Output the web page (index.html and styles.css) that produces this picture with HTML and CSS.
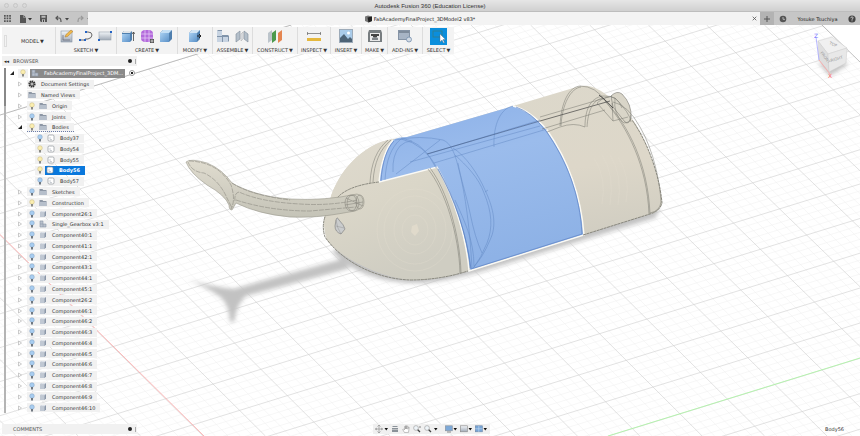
FILE: index.html
```html
<!DOCTYPE html>
<html lang="en">
<head>
<meta charset="utf-8">
<title>Autodesk Fusion 360 (Education License)</title>
<link rel="stylesheet" href="styles.css">
</head>
<body>
<svg class="defs" aria-hidden="true">
  <defs>
    <linearGradient id="gBlue" x1="0" y1="0" x2="1" y2="1"><stop offset="0" stop-color="#a9d0f2"/><stop offset="1" stop-color="#5b91c8"/></linearGradient>
    <linearGradient id="gGrey" x1="0" y1="0" x2="0" y2="1"><stop offset="0" stop-color="#f2f5f8"/><stop offset="1" stop-color="#9fa9b6"/></linearGradient>
    <symbol id="open" viewBox="0 0 8 8"><path d="M6 2v4H2z" fill="#222"/></symbol>
    <symbol id="closed" viewBox="0 0 8 8"><path d="M2.5 2l3 2-3 2z" fill="#fff" stroke="#aaa" stroke-width=".6"/></symbol>
    <symbol id="on" viewBox="0 0 8 8"><circle cx="4" cy="3" r="2.3" fill="#fbeeb0" stroke="#c4b47c" stroke-width=".5"/><path d="M3 5h2v2.5H3z" fill="#8b8b86"/></symbol>
    <symbol id="off" viewBox="0 0 8 8"><circle cx="4" cy="3" r="2.3" fill="#a8cdf0" stroke="#7f9fc0" stroke-width=".5"/><path d="M3 5h2v2.5H3z" fill="#6f7780"/></symbol>
    <symbol id="folder" viewBox="0 0 8 8"><path d="M.5 1h3l.7 1h3.3v5h-7z" fill="#8d97a5"/><path d="M.5 3h7v4h-7z" fill="#b6bfcb"/></symbol>
    <symbol id="gear" viewBox="0 0 8 8"><circle cx="4" cy="4" r="2.8" fill="none" stroke="#333" stroke-width="1.6" stroke-dasharray="1.5 .6"/><circle cx="4" cy="4" r="2" fill="none" stroke="#333" stroke-width="1"/><circle cx="4" cy="4" r=".7" fill="#555"/></symbol>
    <symbol id="body" viewBox="0 0 8 8"><rect x="1" y="1" width="6" height="6" rx="1.2" fill="#fff" stroke="#8e939a" stroke-width=".7"/><path d="M3 3v2.5h2" fill="none" stroke="#aab0b8" stroke-width=".6"/></symbol>
    <symbol id="comp" viewBox="0 0 8 8"><path d="M1 2.5L2.5 1H7v4.5L5.5 7H1z" fill="#8b97a8"/><path d="M1 2.5h4.500V7H1z" fill="#c0c8d3"/><path d="M1 2.500L2.500 1H7L5.500 2.500z" fill="#dde2e9"/></symbol>
    <symbol id="asm" viewBox="0 0 8 8"><path d="M1 1h3v3h3v3H1z" fill="#b9c1cc" stroke="#8b97a8" stroke-width=".6"/><path d="M4 4v3M1 4h3" stroke="#8b97a8" stroke-width=".6"/></symbol>
    <symbol id="cube" viewBox="0 0 14 14"><path d="M1 4l3-3h9v9l-3 3H1z" fill="#4f7fae"/><path d="M1 4h9v9H1z" fill="url(#gBlue)"/><path d="M1 4l3-3h9l-3 3z" fill="#c4dff5"/></symbol>
  </defs>
</svg>

<header class="titlebar">
  <span class="lights"><i></i><i></i><i></i></span>
  <h1>Autodesk Fusion 360 (Education License)</h1>
</header>

<nav class="tabbar">
  <div class="quick">
    <button aria-label="Data panel"><svg width="7" height="7" viewBox="0 0 7 7" fill="#555"><path d="M0 0h1.700v1.700H0zM2.600 0h1.700v1.700H2.600zM5.200 0h1.700v1.700H5.200zM0 2.600h1.700v1.700H0zM2.600 2.600h1.700v1.700H2.600zM5.200 2.600h1.700v1.700H5.200zM0 5.200h1.700v1.700H0zM2.600 5.200h1.700v1.700H2.600zM5.200 5.200h1.700v1.700H5.200z"/></svg></button>
    <button aria-label="File"><svg width="13" height="8" viewBox="0 0 13 8"><path d="M1 0h3.500L7 2.500V8H1z" fill="#555"/><path d="M4.500 0v2.500H7" fill="none" stroke="#aaa" stroke-width=".6"/><path d="M9 3h4l-2 2.500z" fill="#333"/></svg></button>
    <button aria-label="Save"><svg width="7" height="7" viewBox="0 0 7 7"><path d="M0 0h7v7H1L0 6z" fill="#555"/><path d="M1.500 .7h4v2h-4zM2 4.300h3V7H2z" fill="#bbb"/><path d="M3 4.700h1V7H3z" fill="#444"/></svg></button>
    <button aria-label="Undo"><svg width="14" height="8" viewBox="0 0 14 8"><path d="M3 1L1 3l2 2M1 3h3q2 0 2 4" fill="none" stroke="#555" stroke-width="1.200"/><path d="M10 3h4l-2 2.500z" fill="#444"/></svg></button>
    <button aria-label="Redo"><svg width="14" height="8" viewBox="0 0 14 8"><path d="M4 1l2 2-2 2M6 3H3Q1 3 1 7" fill="none" stroke="#999" stroke-width="1.200"/><path d="M10 3h4l-2 2.500z" fill="#777"/></svg></button>
  </div>
  <div class="tab">
    <span class="tab-name"><svg width="7" height="8" viewBox="0 0 7 8"><path d="M0 1.500L3 .5l4 1V6L3.500 7.500 0 6z" fill="#777"/><path d="M2.500 2.500L7 1.500V6L3.500 7.500z" fill="#222"/></svg>FabAcademyFinalProject_3DModel2 v83*</span>
    <button class="close" aria-label="Close tab"><svg width="5" height="5" viewBox="0 0 5 5"><path d="M.7 .7l3.600 3.600M4.300 .7L.7 4.300" stroke="#555" stroke-width=".8"/></svg></button>
  </div>
  <button class="add" aria-label="New tab"><svg width="6" height="6" viewBox="0 0 6 6"><path d="M3 0v6M0 3h6" stroke="#555"/></svg></button>
  <div class="account">
    <button aria-label="Job status"><svg width="8" height="8" viewBox="0 0 8 8"><circle cx="4" cy="4" r="3.300" fill="#555"/><path d="M4 2v2.300h2" stroke="#ccc" fill="none" stroke-width=".8"/></svg></button>
    <button>Yosuke Tsuchiya</button>
    <button aria-label="Help"><svg width="8" height="8" viewBox="0 0 8 8"><circle cx="4" cy="4" r="3.600" fill="#444"/><path d="M2.800 3.200q0-1.300 1.200-1.300t1.200 1Q5.200 3.600 4 4.100v.7M4 5.300v1" stroke="#ddd" fill="none" stroke-width=".8"/></svg></button>
  </div>
</nav>

<main class="viewport">
  <svg class="scene" viewBox="0 25 860 411" preserveAspectRatio="xMidYMid slice" role="img" aria-label="3D model with Body56 highlighted">
    <defs>
      <filter id="soft" x="-20%" y="-20%" width="140%" height="140%"><feGaussianBlur stdDeviation="2"/></filter>
      <linearGradient id="beige" x1=".3" y1="0" x2=".55" y2="1"><stop offset="0" stop-color="#dcd8cb"/><stop offset=".5" stop-color="#ddd7c9"/><stop offset="1" stop-color="#cbc9be"/></linearGradient>
      <linearGradient id="dome" x1="0" y1="0" x2=".4" y2="1"><stop offset="0" stop-color="#dfdace"/><stop offset=".5" stop-color="#dad6c8"/><stop offset="1" stop-color="#cfcdc2"/></linearGradient>
      <linearGradient id="sel" x1="0" y1="0" x2=".3" y2="1"><stop offset="0" stop-color="#8bb0e8"/><stop offset=".4" stop-color="#9bbcec"/><stop offset="1" stop-color="#8eb2e6"/></linearGradient>
      <linearGradient id="arm" x1="0" y1="0" x2="0" y2="1"><stop offset="0" stop-color="#e0dccf"/><stop offset="1" stop-color="#c4c3b7"/></linearGradient>
      <clipPath id="floor"><path d="M0 115L291 25H822L1240 436H0z"/></clipPath>
    </defs>
    <g clip-path="url(#floor)">
      <path id="minor" class="minor"/>
      <path id="major" class="major"/>
      <path d="M0 234.500L204 436" stroke="#ff9a9a" stroke-width=".7"/>
      <path d="M608 436L860 358" stroke="#a8f5a0" stroke-width=".8"/>
    </g>
    <path d="M0 115L291 25M822 25L860 62" stroke="#999" stroke-width=".6"/>

    <g filter="url(#soft)" fill="#c2c2c2">
      <path d="M188 280Q214 287 234 289L342 259L350 268L246 296Q237 303 234 322H230Q229 303 219 296Q205 286 188 280z"/>
      <path d="M332 252Q365 285 425 283Q450 280 480 272L655 218L660 209L640 205L350 240z"/>
    </g>

    <!-- Shell, nose to tail -->
    <path d="M330 200C337 174 361 144 393 139L407 137L513 106L580 86Q590 85 597 89Q609 94 633 120C650 145 660 182 662 203Q660 212 650 214L583 235L468 271C447 277 429 280 410 280C376 276 340 257 327 240Q320 220 330 200z" fill="url(#beige)"/>
    <path d="M330 200C337 174 361 144 393 139Q380 155 379 182L437 167C455 198 466 240 468 271C447 277 429 280 410 280C376 276 340 257 327 240Q320 220 330 200z" fill="url(#dome)"/>
    <g fill="none" stroke="#e4dfd0" stroke-width=".5" opacity=".6">
      <ellipse cx="415" cy="230" rx="13" ry="15"/><ellipse cx="415" cy="230" rx="21" ry="24"/><ellipse cx="415" cy="230" rx="31" ry="34"/><ellipse cx="415" cy="230" rx="38" ry="41"/>
      <path d="M602 155q13 20 8 50M610 155q13 20 8 50M594 158q13 20 8 46M618 157q13 20 8 45"/>
    </g>
    <path d="M412 226l5-2 2 7-4 5-4-4z" fill="#e0dacb"/>
    <path d="M611 96Q617 90 622 94Q632 104 631 118Q629 125 625 122L613 107z" fill="#d9d5c8" stroke="#77766e" stroke-width=".6"/>

    <!-- Selected body -->
    <path d="M379 182C381 163 386 148 393 140Q398 137 407 137L513 106Q530 110 547 130C568 160 581 195 583 235L470 270C466 235 453 195 437 167z" fill="url(#sel)"/>
    <path d="M513 106Q530 110 547 130C568 160 581 195 584 235L469 271C466 235 453 195 437 167L379 182C381 163 386 148 393 140" fill="none" stroke="#fbfaf5" stroke-width="1.400"/>
    <path d="M516 107Q531 112 546 131C567 161 580 195 582 234L471 269C467 236 455 198 438 169M381 181C382 163 387 148 394 141" fill="none" stroke="#5e83c4" stroke-width=".7"/>
    <g fill="none" stroke="#4f76b4" stroke-width=".5" opacity=".7">
      <path d="M385 180C386 161 391 147 401 139Q425 144 436 168M393 172Q392 155 400 146Q405 141 412 141M395 140Q420 135 443 140C451 143 455 154 458 166C466 195 470 232 472 268"/>
      <path d="M401 138Q420 141 432 160C452 190 469 240 470 268M396 174L440 140M453 148C466 156 478 174 485 190C494 209 497 226 490 240Q483 257 473 268M455 155C466 165 479 178 484 193C492 212 493 228 487 243Q481 258 474 267M458 163C461 180 466 194 470 213Q475 238 482 253M455 200C464 220 474 240 474 266M485 192l3-2"/>
      <path d="M494 147C493 124 501 108 513 106M428 154L540 120M434 163L547 129M410 162L540 126"/>
    </g>
    <path d="M427 154L540 121" stroke="#41577d" stroke-width=".6"/>

    <!-- Visible and hidden edges -->
    <g fill="none" stroke="#77776e" stroke-width=".5">
      <path d="M428 169C445 190 459 235 460 273M430 168C447 190 460 235 461 273M370 183C371 163 377 149 388 140M373 182C374 163 380 149 391 140"/>
      <path d="M560 126C561 102 569 87 580 86Q596 86 606 102C629 126 648 165 650 214M561 126C562 104 571 88 581 87M605 101C628 128 647 166 649 214M613 102Q628 105 640 127C654 151 660 183 661 202Q660 211 650 213"/>
      <path d="M540 121L610 101" stroke="#444" stroke-width=".7"/>
      <path d="M540 117L612 96M542 129L605 110M547 132L560 127Q574 122 585 127C585 110 590 98 603 96Q618 95 622 108M587 127C588 112 592 99 604 98M597 103L613 121L628 117M613 121L612 103M597 103Q607 94 615 98Q630 113 631 122M615 98Q613 115 624 123Q631 123 631 115"/>
      <path d="M599 95Q607 101 613 108" stroke="#333" stroke-width=".8"/>
    </g>
    <path d="M379 182Q352 185 340 195Q318 216 325 237C343 263 378 279 410 280Q440 280 468 271M583 235L650 214Q660 211 662 203C660 180 650 145 632 120" fill="none" stroke="#88877d" stroke-width="1" stroke-dasharray="3 .6"/>
    <path d="M336 220Q337 216 339 220Q344 225 345 229L341 234Q335 232 335 226z" fill="#cacccd" stroke="#777" stroke-width=".6"/>
    <path d="M336 220Q337 228 341 234M336 226l8 2" fill="none" stroke="#888" stroke-width=".4"/>

    <!-- Tail -->
    <path d="M186 162Q190 158 207 163Q222 169 232 183C244 190 263 197 290 199Q325 201 357 194Q364 196 363 203Q362 209 355 211C332 215 318 218 290 217Q258 214 236 203L232 210Q229 210 229 205Q225 195 207 185Q190 173 186 162z" fill="url(#arm)" stroke="#99978b" stroke-width=".6"/>
    <g fill="none" stroke="#807f76" stroke-width=".5">
      <path d="M188 162Q192 172 204 173Q219 180 227 198L232 208M189 161Q218 162 231 185Q236 200 231 209M235 201Q234 193 239 192Q261 202 300 204Q330 206 357 200M236 200Q270 211 310 211L356 207M232 183Q250 195 290 200" stroke-dasharray="5 1"/>
      <ellipse cx="351" cy="203" rx="6" ry="8"/><ellipse cx="353" cy="203" rx="6" ry="8"/><ellipse cx="360" cy="202" rx="4" ry="7"/><path d="M345 205l18-3M346 198l17 8"/>
    </g>

    <!-- View cube -->
    <path d="M818 62l12 14 17-11v-3z" fill="#aaa" filter="url(#soft)" opacity=".7"/>
    <path d="M818 41L832 37L847 48L828 54z" fill="#f0f0f0" stroke="#ccc" stroke-width=".5"/>
    <path d="M818 41L828 54L829 72L819 60z" fill="#dedede" stroke="#ccc" stroke-width=".5"/>
    <path d="M828 54L847 48L846 63L829 72z" fill="#e8e8e8" stroke="#ccc" stroke-width=".5"/>
    <path d="M816 37L819 60" stroke="#a3a3ff" stroke-width=".8"/><path d="M819 60L830 74" stroke="#ffa5a5" stroke-width=".8"/>
    <g class="cube-text">
      <text class="axis" x="814" y="38" fill="#7272ff">Z</text><text class="axis" x="828" y="78" fill="#ff6666">X</text>
      <text transform="translate(831 62) rotate(-17)">RIGHT</text>
      <text transform="translate(820 53) rotate(52)">FRONT</text>
      <text transform="translate(829 44) rotate(24)">TOP</text>
    </g>
  </svg>

  <div class="ui">
    <div class="toolbar">
      <div class="group model"><i class="grip"></i><button>MODEL <b>▼</b></button></div>
      <div class="group"><span class="icons">
        <svg width="14" height="14" viewBox="0 0 14 14"><rect x="1" y="2" width="11" height="11" fill="url(#gGrey)" stroke="#8795a5" stroke-width=".6"/><path d="M3 11h7M3 11V6" stroke="#667" stroke-width=".7"/><path d="M5 8l1-2.500L11 1l2 1.500L7.500 7.500z" fill="#f0b94a" stroke="#a87935" stroke-width=".5"/></svg>
        <svg width="14" height="14" viewBox="0 0 14 14"><path d="M1 11h5M6 3h3q4 0 4 3t-4 4H6" fill="none" stroke="#666"/><path d="M0 10h2v2H0zM5 10h2v2H5zM6 2h2v2H6z" fill="#2463c4"/></svg>
        <svg width="14" height="14" viewBox="0 0 14 14"><rect x="1" y="3" width="12" height="8" fill="url(#gGrey)" stroke="#99a3ae" stroke-width=".6"/><path d="M12 2h2v2h-2zM0 10h2v2H0z" fill="#2463c4"/></svg></span><button>SKETCH<b>▼</b></button></div>
      <div class="group"><span class="icons">
        <svg width="14" height="14" viewBox="0 0 14 14"><path d="M1 4l2-2h8v9l-2 2H1z" fill="#4f7fae"/><path d="M1 5h8v8H1z" fill="url(#gBlue)"/><path d="M1 4l2-2h8L9 4z" fill="#e0e4e8"/><path d="M12.500 12V3M11 5l1.500-2L14 5" stroke="#444" fill="none" stroke-width=".8"/></svg>
        <svg width="14" height="14" viewBox="0 0 14 14"><path d="M1 4q0-2 3-3h6q3 1 3 3v6q-1 3-4 3H4q-3-1-3-3z" fill="#b46bdc"/><path d="M1 5h12M1 9h12M5 1v12M9 1v12" stroke="#ead4f8" stroke-width=".7"/><path d="M10 10h4v4h-4z" fill="#555"/><path d="M12 10.500v3M10.500 12h3" stroke="#fff" stroke-width=".6"/></svg>
        <svg width="14" height="14"><use href="#cube"/></svg></span><button>CREATE <b>▼</b></button></div>
      <div class="group"><span class="icons"><svg width="14" height="14" viewBox="0 0 14 14"><path d="M1 4l3-3h8v9l-3 3H1z" fill="#4f7fae"/><path d="M1 4h8v9H1z" fill="url(#gBlue)"/><path d="M1 4l3-3h8L9 4z" fill="#d2e5f5"/><path d="M9 7h4M11 5l2 2-2 2" stroke="#222" fill="none"/></svg></span><button>MODIFY <b>▼</b></button></div>
      <div class="group"><span class="icons"><svg width="14" height="14" viewBox="0 0 14 14"><path d="M1 2l1-1h4v5h6l1 1v5l-1 1H1z" fill="#8194aa"/><path d="M1 2h5v5H1zM1 8h5v5H1zM7 8h5v5H7z" fill="#c8d4e2"/></svg>
        <svg width="14" height="14" viewBox="0 0 14 14"><path d="M1 5l4-3v8l-4 3zM9 2l4 3v8l-4-3z" fill="#b4bfca" stroke="#7d8998" stroke-width=".6"/><path d="M6 5l2-2v7l-2 2z" fill="#e3e7ec" stroke="#999" stroke-width=".4"/></svg></span><button>ASSEMBLE <b>▼</b></button></div>
      <div class="group"><span class="icons"><svg width="14" height="14" viewBox="0 0 14 14"><path d="M0 4l4-3v10l-4 3z" fill="#bcc4cb"/><path d="M4 4l4-3v10l-4 3z" fill="#4c9a4d"/><path d="M10 4l4-3v10l-4 3z" fill="#e58650"/></svg></span><button>CONSTRUCT <b>▼</b></button></div>
      <div class="group"><span class="icons"><svg width="14" height="14" viewBox="0 0 14 14"><path d="M0 4.500h14M.5 3v3M13.500 3v3" stroke="#777" stroke-width=".8"/><rect y="9" width="14" height="3" fill="#e5b83d"/></svg></span><button>INSPECT <b>▼</b></button></div>
      <div class="group"><span class="icons"><svg width="14" height="14" viewBox="0 0 14 14"><rect x=".5" y=".5" width="13" height="13" fill="#a9cbe9" stroke="#9dabb9"/><path d="M1 9l4-4 4 5 2-2 2 2v3H1z" fill="#4d6376"/><circle cx="9.500" cy="4" r="1.500" fill="#fff"/></svg></span><button>INSERT <b>▼</b></button></div>
      <div class="group"><span class="icons"><svg width="14" height="14" viewBox="0 0 14 14"><path d="M1 1h12l1 3v9H0V4z" fill="#777d80"/><rect x="2" y="4" width="10" height="8" fill="#e9e9e9"/><path d="M3 5h8v2H9v1H5V7H3z" fill="#444"/><path d="M4 9l2-1h2l2 1v2H4z" fill="#808589"/></svg></span><button>MAKE <b>▼</b></button></div>
      <div class="group"><span class="icons"><svg width="14" height="14" viewBox="0 0 14 14"><rect x=".5" y="1.500" width="11" height="9" fill="#a7b4c5" stroke="#8593a5"/><path d="M1 2h10v2H1z" fill="#7e8b9b"/><circle cx="11" cy="10.500" r="2.500" fill="#d2dae4" stroke="#7790ae" stroke-width=".8"/></svg></span><button>ADD-INS <b>▼</b></button></div>
      <div class="group"><span class="icons"><svg width="17" height="17" viewBox="0 0 17 17"><rect width="17" height="17" fill="#0b8edc"/><rect x="3" y="3" width="9" height="6" fill="none" stroke="#3b7a79" stroke-width=".7"/><path d="M10 6v8l2-2 1.500 3 1-.6L13 11.500h2.500z" fill="#fff" stroke="#567" stroke-width=".4"/></svg></span><button>SELECT <b>▼</b></button></div>
    </div>

    <div class="bar"><span class="rewind">◂◂</span><h2>BROWSER</h2><button class="dot" aria-label="Browser options"></button><i class="edge"></i></div>

    <div class="browser">
      <i class="scroll"></i>
      <ul class="tree">
        <li class="root"><svg><use href="#open"/></svg><button class="chip"><svg><use href="#on"/></svg></button><button class="chip active"><svg><use href="#asm"/></svg><span>FabAcademyFinalProject_3DM...</span></button><input type="radio" checked aria-label="Activate component"></li>
        <li><svg><use href="#closed"/></svg><button class="chip"><svg><use href="#gear"/></svg><span>Document Settings</span></button></li>
        <li><svg><use href="#closed"/></svg><button class="chip"><svg><use href="#folder"/></svg><span>Named Views</span></button></li>
        <li><svg><use href="#closed"/></svg><button class="chip"><svg><use href="#on"/></svg><svg><use href="#folder"/></svg><span>Origin</span></button></li>
        <li><svg><use href="#closed"/></svg><button class="chip"><svg><use href="#off"/></svg><svg><use href="#folder"/></svg><span>Joints</span></button></li>
        <li class="dotted"><svg><use href="#open"/></svg><button class="chip"><svg><use href="#on"/></svg><svg><use href="#folder"/></svg><span>Bodies</span></button></li>
        <li class="sub"><button class="chip"><svg><use href="#off"/></svg><svg><use href="#body"/></svg><span>Body37</span></button></li>
        <li class="sub"><button class="chip"><svg><use href="#on"/></svg><svg><use href="#body"/></svg><span>Body54</span></button></li>
        <li class="sub"><button class="chip"><svg><use href="#on"/></svg><svg><use href="#body"/></svg><span>Body55</span></button></li>
        <li class="sub"><button class="chip"><svg><use href="#on"/></svg></button><button class="chip selected"><svg><use href="#body"/></svg><span>Body56</span></button></li>
        <li class="sub"><button class="chip"><svg><use href="#off"/></svg><svg><use href="#body"/></svg><span>Body57</span></button></li>
        <li><svg><use href="#closed"/></svg><button class="chip"><svg><use href="#off"/></svg><svg><use href="#folder"/></svg><span>Sketches</span></button></li>
        <li><svg><use href="#closed"/></svg><button class="chip"><svg><use href="#on"/></svg><svg><use href="#folder"/></svg><span>Construction</span></button></li>
        <li><svg><use href="#closed"/></svg><button class="chip"><svg><use href="#off"/></svg><svg><use href="#comp"/></svg><span>Component26:1</span></button></li>
        <li><svg><use href="#closed"/></svg><button class="chip"><svg><use href="#off"/></svg><svg><use href="#asm"/></svg><span>Single_Gearbox v3:1</span></button></li>
        <li><svg><use href="#closed"/></svg><button class="chip"><svg><use href="#off"/></svg><svg><use href="#comp"/></svg><span>Component40:1</span></button></li>
        <li><svg><use href="#closed"/></svg><button class="chip"><svg><use href="#off"/></svg><svg><use href="#comp"/></svg><span>Component41:1</span></button></li>
        <li><svg><use href="#closed"/></svg><button class="chip"><svg><use href="#off"/></svg><svg><use href="#comp"/></svg><span>Component42:1</span></button></li>
        <li><svg><use href="#closed"/></svg><button class="chip"><svg><use href="#off"/></svg><svg><use href="#comp"/></svg><span>Component43:1</span></button></li>
        <li><svg><use href="#closed"/></svg><button class="chip"><svg><use href="#off"/></svg><svg><use href="#comp"/></svg><span>Component44:1</span></button></li>
        <li><svg><use href="#closed"/></svg><button class="chip"><svg><use href="#off"/></svg><svg><use href="#comp"/></svg><span>Component45:1</span></button></li>
        <li><svg><use href="#closed"/></svg><button class="chip"><svg><use href="#off"/></svg><svg><use href="#comp"/></svg><span>Component26:2</span></button></li>
        <li><svg><use href="#closed"/></svg><button class="chip"><svg><use href="#off"/></svg><svg><use href="#comp"/></svg><span>Component46:1</span></button></li>
        <li><svg><use href="#closed"/></svg><button class="chip"><svg><use href="#off"/></svg><svg><use href="#comp"/></svg><span>Component46:2</span></button></li>
        <li><svg><use href="#closed"/></svg><button class="chip"><svg><use href="#off"/></svg><svg><use href="#comp"/></svg><span>Component46:3</span></button></li>
        <li><svg><use href="#closed"/></svg><button class="chip"><svg><use href="#off"/></svg><svg><use href="#comp"/></svg><span>Component46:4</span></button></li>
        <li><svg><use href="#closed"/></svg><button class="chip"><svg><use href="#off"/></svg><svg><use href="#comp"/></svg><span>Component46:5</span></button></li>
        <li><svg><use href="#closed"/></svg><button class="chip"><svg><use href="#off"/></svg><svg><use href="#comp"/></svg><span>Component46:6</span></button></li>
        <li><svg><use href="#closed"/></svg><button class="chip"><svg><use href="#off"/></svg><svg><use href="#comp"/></svg><span>Component46:7</span></button></li>
        <li><svg><use href="#closed"/></svg><button class="chip"><svg><use href="#off"/></svg><svg><use href="#comp"/></svg><span>Component46:8</span></button></li>
        <li><svg><use href="#closed"/></svg><button class="chip"><svg><use href="#off"/></svg><svg><use href="#comp"/></svg><span>Component46:9</span></button></li>
        <li><svg><use href="#closed"/></svg><button class="chip"><svg><use href="#off"/></svg><svg><use href="#comp"/></svg><span>Component46:10</span></button></li>
      </ul>
    </div>

    <footer class="bottom">
      <div class="bar comments"><h2>COMMENTS</h2><button class="dot" aria-label="Comment options"></button><i class="edge"></i></div>
      <div class="navbar">
        <button aria-label="Orbit"><svg width="13" height="8" viewBox="0 0 13 8"><path d="M4 0v8M0 4h8M2.500 1.500L4 0l1.500 1.500M2.500 6.500L4 8l1.500-1.500M2 3L.5 4 2 5M6 3l1.500 1L6 5" stroke="#999" fill="none" stroke-width=".8"/><path d="M9.500 3h3.500l-1.700 2.500z" fill="#111"/></svg></button>
        <button aria-label="Look at"><svg width="8" height="8" viewBox="0 0 8 8"><path d="M1 2l1-1h4l1 1zM1 3h6v4H1z" fill="#8b9299"/><path d="M1 4.500h6" stroke="#ddd" stroke-width=".6"/></svg></button>
        <button aria-label="Pan"><svg width="8" height="8" viewBox="0 0 8 8"><path d="M2.500 7.500L.7 4.500l.8-.5 1 1V1.500h1V4 .7h1V4l.3-3h1v3.200l.6-2 .8.200-.7 5z" fill="#fff" stroke="#888" stroke-width=".5"/></svg></button>
        <button aria-label="Zoom"><svg width="8" height="8" viewBox="0 0 8 8"><circle cx="3" cy="3" r="2.400" fill="#eef4f8" stroke="#999" stroke-width=".6"/><path d="M4.700 4.700L7 7" stroke="#444" stroke-width="1.300"/><path d="M7 1v2M6 2h2" stroke="#777" stroke-width=".5"/></svg></button>
        <button aria-label="Fit"><svg width="14" height="8" viewBox="0 0 14 8"><circle cx="3" cy="3" r="2.400" fill="#eef4f8" stroke="#999" stroke-width=".6"/><path d="M4.700 4.700L7 7" stroke="#444" stroke-width="1.300"/><path d="M10 3h3.500l-1.700 2.500z" fill="#111"/></svg></button>
        <button class="gap" aria-label="Display settings"><svg width="12" height="8" viewBox="0 0 12 8"><rect x=".3" y=".8" width="7" height="5" fill="#7da9d8" stroke="#8a9199" stroke-width=".6"/><path d="M2 7h4" stroke="#888"/><path d="M8.500 3H12l-1.700 2.500z" fill="#111"/></svg></button>
        <button aria-label="Grid and snaps"><svg width="12" height="8" viewBox="0 0 12 8"><rect x=".3" y=".8" width="7" height="6" fill="url(#gGrey)" stroke="#888" stroke-width=".6"/><path d="M8.500 3H12l-1.700 2.500z" fill="#111"/></svg></button>
        <button aria-label="Viewports"><svg width="12" height="8" viewBox="0 0 12 8"><rect x=".3" y=".8" width="7" height="6" fill="#78a5d6" stroke="#6c86a5" stroke-width=".6"/><path d="M3.800 1v6M0 3.800h7.500" stroke="#c6dcf2" stroke-width=".6"/><path d="M8.500 3H12l-1.700 2.500z" fill="#111"/></svg></button>
      </div>
      <output>Body56</output>
    </footer>
  </div>
</main>
<script src="grid.js"></script>
</body>
</html>
```
FILE: styles.css
```css
* { box-sizing: border-box; }
body {
  margin: 0;
  height: 100vh;
  display: flex;
  flex-direction: column;
  overflow: hidden;
  font: 5px/8px "DejaVu Sans", sans-serif;
  color: #333;
  background: #fff;
}
button {
  margin: 0;
  padding: 0;
  border: 0;
  background: none;
  font: inherit;
  color: inherit;
  white-space: nowrap;
}
button, .icons, .tab-name { display: flex; align-items: center; }
svg { display: block; flex: none; }
h1, h2 { margin: 0; font: inherit; }
.defs { position: absolute; width: 0; height: 0; }

.titlebar {
  display: grid;
  grid-template-columns: 1fr auto 1fr;
  align-items: center;
  height: 12px;
  background: linear-gradient(#e6e6e6, #d0d0d0);
  border-bottom: 1px solid #bdbdbd;
}
.titlebar h1 { font: 6px/8px "Liberation Sans", sans-serif; }
.lights { display: flex; gap: 4px; padding-left: 4px; }
.lights i { width: 5px; height: 5px; border-radius: 50%; background: #d9d9d9; border: 1px solid #c6c6c6; }

.tabbar { display: flex; height: 13px; background: #c6c6c6; }
.quick { display: flex; align-items: center; gap: 8px; width: 88px; padding-left: 4px; }
.tab { flex: 1; display: flex; align-items: center; background: #f3f3f3; padding-right: 3px; }
.tab-name { margin: 0 auto; gap: 2px; color: #222; }
.add { width: 14px; justify-content: center; background: #b3b3b3; }
.account { display: flex; align-items: center; justify-content: space-between; width: 86px; padding: 0 4px 0 5px; color: #222; }

.viewport { position: relative; flex: 1; min-height: 0; }
.scene { position: absolute; inset: 0; width: 100%; height: 100%; }
.minor { stroke: #efefef; stroke-width: .5; fill: none; }
.major { stroke: #cfcfcf; stroke-width: .6; fill: none; }
.cube-text { font-size: 4px; fill: #999; }
.axis { font-size: 6px; }

.ui { position: relative; height: 100%; display: flex; flex-direction: column; align-items: flex-start; padding: 2px 0 2px 2px; }
.toolbar {
  display: grid;
  grid-template-columns: 53px 61px 61px 35px 40px 45px 33px 31px 26px 35px 32px;
  height: 27px;
  background: #f3f3f3;
}
.group { display: flex; flex-direction: column; align-items: center; justify-content: space-between; border-left: 1px solid #ddd; }
.group b { margin-left: 1px; }
.icons { height: 18px; gap: 5px; }
.model { flex-direction: row; justify-content: flex-start; gap: 14px; border: 0; padding-left: 2px; }
.grip { width: 3px; height: 12px; border: 1px solid #ddd; }

.bar { display: flex; align-items: center; width: 135px; height: 10px; margin-top: 2px; padding: 0 1px 0 2px; background: #f1f1f1; color: #555; }
.bar h2 { flex: 1; }
.rewind { width: 9px; color: #222; }
.dot { width: 4px; height: 4px; border-radius: 50%; background: #222; }
.edge { width: 1px; height: 5px; margin-left: 3px; background: #aaa; }

.browser { flex: 1; display: flex; min-height: 0; padding: 2px 0 11px 2px; }
.scroll { width: 2px; background: linear-gradient(#888 11%, #b4b4b4 11%); }
.tree { flex: 1; display: grid; grid-auto-rows: 1fr; margin: 0; padding: 0 0 0 10px; list-style: none; }
.tree li { display: flex; align-items: center; gap: 3px; min-height: 0; }
.tree svg { width: 8px; height: 8px; }
.chip { height: 9px; gap: 3px; padding: 0 5px 0 1px; background: #f1f1f1; }
.chip span { padding-left: 2px; }
.tree .root { margin-left: -8px; gap: 2px; }
.sub { padding-left: 19px; }
.chip:has(> svg:only-child) { padding-right: 1px; }
.sub .selected { background: #0a78dc; color: #fff; font-weight: bold; margin-left: -3px; }
.root .active { background: #8a8a8a; color: #fff; padding-right: 2px; }
.root input { appearance: none; width: 6px; height: 6px; margin: 0 0 0 2px; border: 1px solid #999; border-radius: 50%; background: radial-gradient(#222 45%, #fff 50%); }
.dotted .chip { border-bottom: 1px dotted #6b7ca8; }

.bottom { align-self: stretch; display: grid; grid-template-columns: 1fr auto 1fr; align-items: center; }
.bottom .bar { margin: 0; }
.comments h2 { padding-left: 9px; }
.navbar { display: flex; align-items: center; gap: 3px; height: 10px; padding: 0 3px 0 2px; background: #f0f0f0; }
.gap { margin-left: 4px; }
.bottom output { justify-self: end; padding-right: 16px; }
```
FILE: grid.js
```js
// Ground plane: perspective lines in two directions, five minor cells per major cell.
const across = k => `M${411 + 60.2 * k - 0.217 * k * k} 25L${827 + 62.4 * k} 436`;
const along = k => {
  const y = 115 + 32.6 * k + 0.09 * k * k;
  return `M0 ${y}L860 ${y - 266}`;
};
let minor = '';
let major = '';
for (let i = -85; i <= 35; i++) {
  if (i % 5) minor += across(i / 5);
  else major += across(i / 5);
}
for (let i = 0; i <= 100; i++) {
  if (i % 5) minor += along(i / 5);
  else major += along(i / 5);
}
document.getElementById('minor').setAttribute('d', minor);
document.getElementById('major').setAttribute('d', major);
```
